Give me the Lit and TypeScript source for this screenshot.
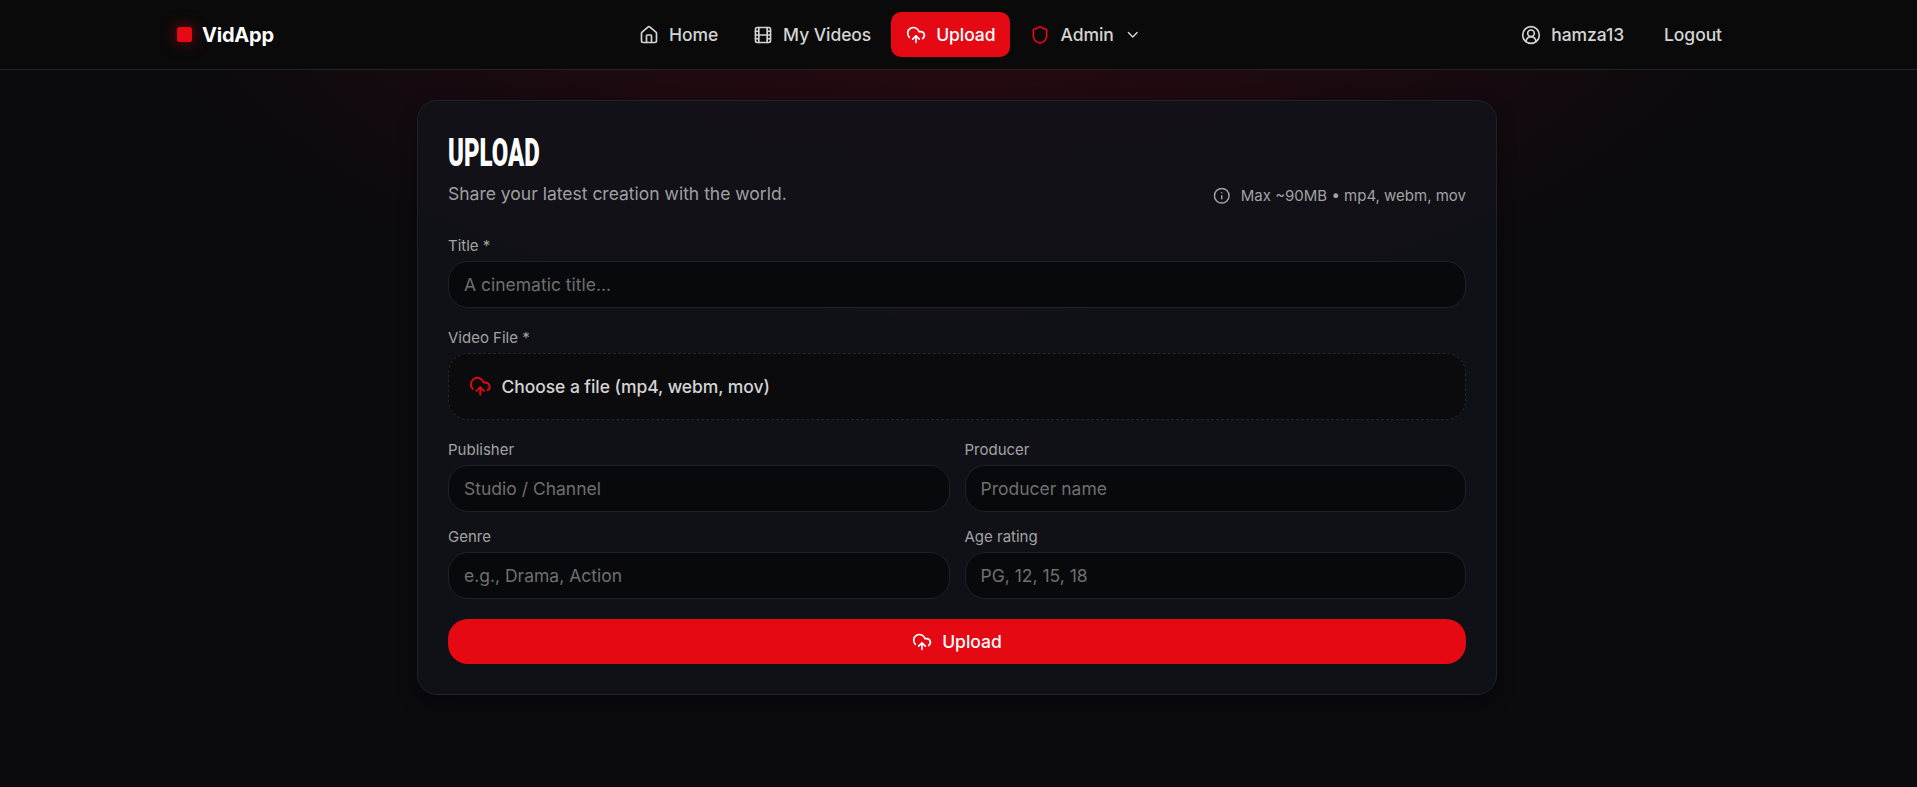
import { LitElement, html, css, svg } from "lit";
import { customElement } from "lit/decorators.js";

const paths = {
  home: svg`<path d="M15 21v-8a1 1 0 0 0-1-1h-4a1 1 0 0 0-1 1v8"/><path d="M3 10a2 2 0 0 1 .709-1.528l7-5.999a2 2 0 0 1 2.582 0l7 5.999A2 2 0 0 1 21 10v9a2 2 0 0 1-2 2H5a2 2 0 0 1-2-2z"/>`,
  film: svg`<rect width="18" height="18" x="3" y="3" rx="2"/><path d="M7 3v18M3 7.5h4M3 12h18M3 16.5h4M17 3v18M17 7.5h4M17 16.5h4"/>`,
  upload: svg`<path d="M12 13v8"/><path d="M4 14.899A7 7 0 1 1 15.71 8h1.79a4.5 4.5 0 0 1 2.5 8.242"/><path d="m8 17 4-4 4 4"/>`,
  shield: svg`<path d="M20 13c0 5-3.5 7.5-7.66 8.95a1 1 0 0 1-.67-.01C7.5 20.5 4 18 4 13V6a1 1 0 0 1 1-1c2 0 4.5-1.2 6.24-2.72a1.17 1.17 0 0 1 1.52 0C14.51 3.81 17 5 19 5a1 1 0 0 1 1 1z"/>`,
  chevron: svg`<path d="m6 9 6 6 6-6"/>`,
  user: svg`<path d="M18 20a6 6 0 0 0-12 0"/><circle cx="12" cy="10" r="4"/><circle cx="12" cy="12" r="10"/>`,
  info: svg`<circle cx="12" cy="12" r="10"/><path d="M12 16v-4M12 8h.01"/>`,
};
const icon = (name: keyof typeof paths, size = 20) => html`<svg width=${size} height=${size} viewBox="0 0 24 24"
  fill="none" stroke="currentColor" stroke-width="2" stroke-linecap="round" stroke-linejoin="round">${paths[name]}</svg>`;

@customElement("app-root")
export class AppRoot extends LitElement {
  static styles = css`
    :host { display: block; font-family: Inter, sans-serif; font-size: 17.5px; color: #d4d4d4; }
    * { box-sizing: border-box; }
    svg { display: block; flex: none; }
    .page { min-height: 787px; padding-right: 3px;
      background: radial-gradient(1440px 730px at 50% -10%, rgba(229, 9, 20, 0.175), transparent 60%), #0a0a0f; }
    .bar { height: 70px; margin-right: -3px; padding-right: 3px; background: #0a0a0a; border-bottom: 1px solid #242424; }
    .inner { width: 1560px; height: 69px; margin: 0 auto; display: flex; justify-content: space-between; align-items: center; }
    .brand { display: flex; align-items: center; gap: 10px; color: #fff; font-weight: 700; font-size: 20px; letter-spacing: -0.2px; }
    .mark { width: 15px; height: 15px; border-radius: 2.5px; background: #e50914; box-shadow: 0 0 15px rgba(229, 9, 20, 0.6); }
    .links { display: flex; gap: 5px; }
    .item { display: flex; align-items: center; gap: 10px; height: 45px; padding: 0 15px; border-radius: 10px; font-weight: 500; letter-spacing: -0.07px; white-space: nowrap; }
    .active { background: #e50914; color: #fff; }
    .red { color: #e50914; }
    .account { display: flex; justify-content: flex-end; gap: 10px; }
    .card { width: 1080px; height: 595px; margin: 30px auto 0; padding: 30px; border: 1px solid #1f2229; border-radius: 20px;
      background: rgba(17, 19, 24, 0.86); box-shadow: 0 8px 20px rgba(0, 0, 0, 0.3); }
    .head { display: flex; justify-content: space-between; height: 105px; }
    h1 { margin: 0; width: 150px; height: 50px; font-family: Roboto, sans-serif; font-size: 38px; line-height: 45px; font-weight: 900; color: #fff; transform: scaleX(0.63); transform-origin: 0 0; }
    .sub { line-height: 26px; color: #a0a0a0; }
    .hint { display: flex; align-items: center; gap: 10px; height: 20px; margin-top: 54.5px; font-size: 15px; color: #a3a3a3; }
    label { display: block; height: 25px; font-size: 15px; line-height: 19px; color: #a3a3a3; }
    input { display: block; width: 100%; height: 47px; padding: 0 15px; border: 1px solid #1f2126; border-radius: 20px; background: #08090c; font: inherit; color: #fff; }
    input::placeholder { color: #6f6f6f; opacity: 1; }
    .block { margin-bottom: 20px; }
    .file { display: flex; align-items: center; gap: 10px; height: 67px; padding: 0 20px; border: 1px dashed #26262c; border-radius: 20px; background: #0b0b0d; font-weight: 500; letter-spacing: -0.07px; }
    .grid { display: grid; grid-template-columns: 1fr 1fr; gap: 15px; margin-bottom: 20px; }
    button { display: flex; width: 100%; height: 45px; align-items: center; justify-content: center; gap: 10px; border: 0; border-radius: 20px; background: #e50914; color: #fff; font: inherit; font-weight: 500; }
  `;

  private field(label: string, placeholder: string) {
    return html`<div><label>${label}</label><input placeholder=${placeholder} aria-label=${label} /></div>`;
  }

  render() {
    return html`<div class="page">
      <header class="bar"><div class="inner">
        <div class="brand"><span class="mark"></span>VidApp</div>
        <nav class="links">
          <a class="item">${icon("home")}Home</a>
          <a class="item">${icon("film")}My Videos</a>
          <a class="item active">${icon("upload")}Upload</a>
          <a class="item"><span class="red">${icon("shield")}</span>Admin ${icon("chevron", 17.5)}</a>
        </nav>
        <div class="account"><a class="item">${icon("user")}hamza13</a><a class="item">Logout</a></div>
      </div></header>
      <main class="card">
        <div class="head">
          <div><h1>UPLOAD</h1><div class="sub">Share your latest creation with the world.</div></div>
          <div class="hint">${icon("info", 17.5)}Max ~90MB • mp4, webm, mov</div>
        </div>
        <div class="block">${this.field("Title *", "A cinematic title...")}</div>
        <div class="block"><label>Video File *</label>
          <div class="file"><span class="red">${icon("upload", 22.5)}</span>Choose a file (mp4, webm, mov)</div></div>
        <div class="grid">
          ${this.field("Publisher", "Studio / Channel")}${this.field("Producer", "Producer name")}
          ${this.field("Genre", "e.g., Drama, Action")}${this.field("Age rating", "PG, 12, 15, 18")}
        </div>
        <button>${icon("upload")}Upload</button>
      </main>
    </div>`;
  }
}
